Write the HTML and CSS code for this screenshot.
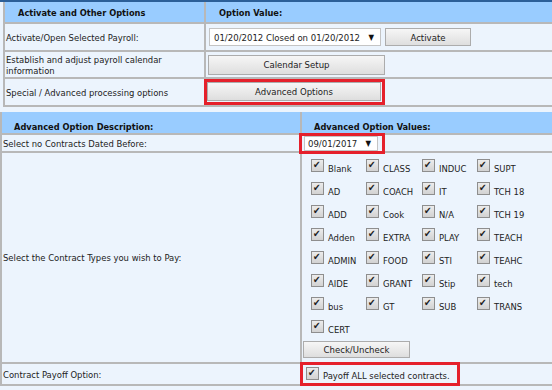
FILE: index.html
```html
<!DOCTYPE html>
<html lang="en">
<head>
    <meta charset="UTF-8">
    <title>Payroll Options</title>
    <link rel="stylesheet" href="styles.css">
</head>
<body>

<div class="topbar"></div>

<!-- Activate and other options -->
<table class="options first">
    <tr class="head">
        <th class="desc">Activate and Other Options</th>
        <th>Option Value:</th>
    </tr>
    <tr class="row1">
        <td>Activate/Open Selected Payroll:</td>
        <td>
            <div class="value-line">
                <span class="select payroll">01/20/2012 Closed on 01/20/2012 <span class="arrow">&#9660;</span></span>
                <button class="btn activate">Activate</button>
            </div>
        </td>
    </tr>
    <tr class="row2">
        <td>Establish and adjust payroll calendar information</td>
        <td><button class="btn calendar">Calendar Setup</button></td>
    </tr>
    <tr class="row3">
        <td>Special / Advanced processing options</td>
        <td>
            <span class="mark adv-mark"><button class="btn advanced">Advanced Options</button></span>
        </td>
    </tr>
</table>

<!-- Advanced options -->
<table class="options second">
    <tr class="head">
        <th class="desc">Advanced Option Description:</th>
        <th>Advanced Option Values:</th>
    </tr>
    <tr class="row-date">
        <td>Select no Contracts Dated Before:</td>
        <td>
            <span class="mark date-mark"><span class="select date">09/01/2017 <span class="arrow">&#9660;</span></span></span>
        </td>
    </tr>
    <tr class="row-types">
        <td>Select the Contract Types you wish to Pay:</td>
        <td class="types-cell">
            <div class="types">
                <label class="type"><span class="cb"></span><span>Blank</span></label>
                <label class="type"><span class="cb"></span><span>CLASS</span></label>
                <label class="type"><span class="cb"></span><span>INDUC</span></label>
                <label class="type"><span class="cb"></span><span>SUPT</span></label>
                <label class="type"><span class="cb"></span><span>AD</span></label>
                <label class="type"><span class="cb"></span><span>COACH</span></label>
                <label class="type"><span class="cb"></span><span>IT</span></label>
                <label class="type"><span class="cb"></span><span>TCH 18</span></label>
                <label class="type"><span class="cb"></span><span>ADD</span></label>
                <label class="type"><span class="cb"></span><span>Cook</span></label>
                <label class="type"><span class="cb"></span><span>N/A</span></label>
                <label class="type"><span class="cb"></span><span>TCH 19</span></label>
                <label class="type"><span class="cb"></span><span>Adden</span></label>
                <label class="type"><span class="cb"></span><span>EXTRA</span></label>
                <label class="type"><span class="cb"></span><span>PLAY</span></label>
                <label class="type"><span class="cb"></span><span>TEACH</span></label>
                <label class="type"><span class="cb"></span><span>ADMIN</span></label>
                <label class="type"><span class="cb"></span><span>FOOD</span></label>
                <label class="type"><span class="cb"></span><span>STI</span></label>
                <label class="type"><span class="cb"></span><span>TEAHC</span></label>
                <label class="type"><span class="cb"></span><span>AIDE</span></label>
                <label class="type"><span class="cb"></span><span>GRANT</span></label>
                <label class="type"><span class="cb"></span><span>Stip</span></label>
                <label class="type"><span class="cb"></span><span>tech</span></label>
                <label class="type"><span class="cb"></span><span>bus</span></label>
                <label class="type"><span class="cb"></span><span>GT</span></label>
                <label class="type"><span class="cb"></span><span>SUB</span></label>
                <label class="type"><span class="cb"></span><span>TRANS</span></label>
                <label class="type"><span class="cb"></span><span>CERT</span></label>
            </div>
            <button class="btn check">Check/Uncheck</button>
        </td>
    </tr>
    <tr class="row-payoff">
        <td>Contract Payoff Option:</td>
        <td>
            <span class="mark payoff-mark"><label class="type"><span class="cb"></span><span>Payoff ALL selected contracts.</span></label></span>
        </td>
    </tr>
</table>

</body>
</html>
```

FILE: styles.css
```css
/* Basic reset */
body {
    margin: 0;
    background-color: #ecf4fd;
    font-family: "DejaVu Sans Condensed", "DejaVu Sans", sans-serif;
    font-size: 9.4px;
    color: #222222;
    overflow: hidden;
    width: 552px;
    height: 390px;
}

.topbar {
    height: 2px;
    background-color: #2c5f98;
}

/* Option tables */
.options {
    border-collapse: collapse;
    table-layout: fixed;
    width: 580px;
}

.options th,
.options td {
    border: 2px solid #b8b8b8;
    padding: 0 0 0 1px;
    text-align: left;
    vertical-align: middle;
    background-color: #ecf4fd;
}

.options th {
    background-color: #99ccff;
    color: #111111;
    font-weight: bold;
    font-size: 9.2px;
    border-top: none;
}

.first {
    margin-left: 3px;
}

.first th {
    padding-left: 13px;
}

.first .desc { width: 186px; }
.first .head { height: 21px; }
.first .row1 { height: 28px; }
.first .row2 { height: 27px; }
.first .row3 { height: 28px; }

.second {
    margin-top: 5px;
}

.second th {
    padding-left: 12px;
}

.second .desc { width: 286px; }

.second .head th {
    height: 20px;
    vertical-align: bottom;
    padding-bottom: 1px;
}

.second .row-date { height: 18px; }
.second .row-payoff { height: 22px; }

/* Fake select boxes */
.value-line {
    display: flex;
    align-items: center;
    gap: 4px;
}

.select {
    display: inline-flex;
    align-items: center;
    justify-content: space-between;
    box-sizing: border-box;
    background-color: #ffffff;
    border: 1px solid #c4c4c4;
    color: #222222;
    font-size: 9.5px;
    vertical-align: top;
}

.select .arrow {
    font-size: 8px;
    color: #111111;
}

.payroll {
    width: 172px;
    height: 18px;
    padding: 0 6px 0 4px;
    margin-left: 2px;
}

.date {
    width: 74px;
    height: 15px;
    padding: 0 6px 0 3px;
    margin-left: 2px;
}

/* Buttons */
.btn {
    box-sizing: border-box;
    font-family: "DejaVu Sans Condensed", "DejaVu Sans", sans-serif;
    font-size: 9.5px;
    color: #222222;
    background: linear-gradient(#f6f6f6, #dedede);
    border: 1px solid #acacac;
    border-radius: 0;
    padding: 0;
}

.activate {
    width: 86px;
    height: 18px;
}

.calendar {
    width: 177px;
    height: 20px;
    margin-left: 1px;
}

.advanced {
    width: 174px;
    height: 19px;
    display: block;
}

.check {
    display: block;
    width: 107px;
    height: 17px;
    margin: -2px 0 4px 0;
}

/* Red highlight boxes */
.mark {
    display: inline-block;
    outline: 3px solid #e5202b;
    vertical-align: middle;
}

.adv-mark {
    padding: 0 1px 1px 0;
}

.date-mark {
    width: 80px;
    height: 15px;
    margin-left: -1px;
}

.payoff-mark {
    width: 154px;
    height: 18px;
    box-sizing: border-box;
    padding: 2px 0 0 3px;
}

/* Contract type checkboxes */
.types-cell {
    vertical-align: top;
}

.types {
    display: grid;
    grid-template-columns: 55px 56px 55px 56px;
    grid-auto-rows: 23px;
    padding: 6px 0 0 8px;
}

.type {
    display: flex;
    align-items: flex-start;
    font-size: 9.4px;
    line-height: 12px;
    white-space: nowrap;
}

.type span + span {
    margin-top: 4px;
}

.payoff-mark .type span + span {
    margin-top: 3px;
}

.cb {
    flex: none;
    position: relative;
    width: 11px;
    height: 11px;
    margin-right: 4px;
    border: 1px solid #8e8e8e;
    background: linear-gradient(#ececec, #d2d2d2);
}

.cb::after {
    content: "\2714";
    position: absolute;
    left: 1px;
    top: -1px;
    font-size: 10px;
    line-height: 12px;
    color: #1e1e1e;
}
```
